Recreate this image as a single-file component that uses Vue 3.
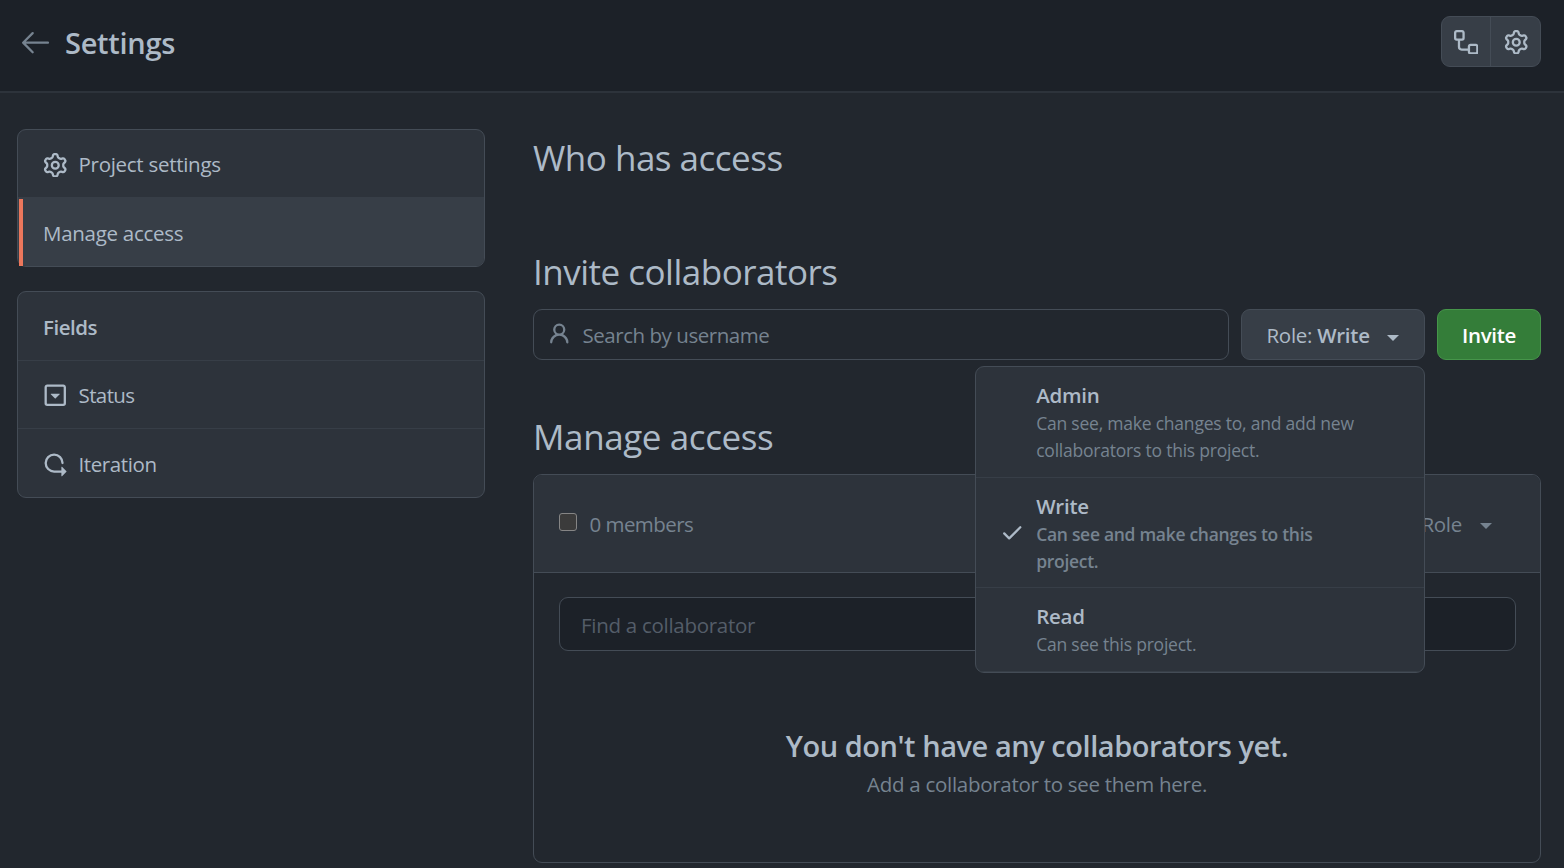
<script setup>
const icons = {
  arrow: 'M10.78 19.03a.75.75 0 01-1.06 0l-6.25-6.25a.75.75 0 010-1.06l6.25-6.25a.75.75 0 111.06 1.06L5.81 11.5h14.44a.75.75 0 010 1.5H5.81l4.97 4.97a.75.75 0 010 1.06z',
  workflow: 'M0 1.75C0 .784.784 0 1.75 0h3.5C6.216 0 7 .784 7 1.75v3.5A1.75 1.75 0 015.25 7H4v4a1 1 0 001 1h4v-1.25C9 9.784 9.784 9 10.75 9h3.5c.966 0 1.75.784 1.75 1.75v3.5A1.75 1.75 0 0114.25 16h-3.5A1.75 1.75 0 019 14.25v-.75H5A2.5 2.5 0 012.5 11V7h-.75A1.75 1.75 0 010 5.25v-3.5zm1.75-.25a.25.25 0 00-.25.25v3.5c0 .138.112.25.25.25h3.5a.25.25 0 00.25-.25v-3.5a.25.25 0 00-.25-.25h-3.5zm9 9a.25.25 0 00-.25.25v3.5c0 .138.112.25.25.25h3.5a.25.25 0 00.25-.25v-3.5a.25.25 0 00-.25-.25h-3.5z',
  gear: 'M7.429 1.525a6.593 6.593 0 011.142 0c.036.003.108.036.137.146l.289 1.105c.147.56.55.967.997 1.189.174.086.341.183.501.29.417.278.97.423 1.53.27l1.102-.303c.11-.03.175.016.195.046.219.31.41.641.573.989.014.031.022.11-.059.19l-.815.806c-.411.406-.562.957-.53 1.456a4.588 4.588 0 010 .582c-.032.499.119 1.05.53 1.456l.815.806c.08.08.073.159.059.19a6.494 6.494 0 01-.573.99c-.02.029-.086.074-.195.045l-1.103-.303c-.559-.153-1.112-.008-1.529.27-.16.107-.327.204-.5.29-.449.222-.851.628-.998 1.189l-.289 1.105c-.029.11-.101.143-.137.146a6.613 6.613 0 01-1.142 0c-.036-.003-.108-.037-.137-.146l-.289-1.105c-.147-.56-.55-.967-.997-1.189a4.502 4.502 0 01-.501-.29c-.417-.278-.97-.423-1.53-.27l-1.102.303c-.11.03-.175-.016-.195-.046a6.492 6.492 0 01-.573-.989c-.014-.031-.022-.11.059-.19l.815-.806c.411-.406.562-.957.53-1.456a4.587 4.587 0 010-.582c.032-.499-.119-1.05-.53-1.456l-.815-.806c-.08-.08-.073-.159-.059-.19a6.44 6.44 0 01.573-.99c.02-.029.086-.075.195-.045l1.103.303c.559.153 1.112.008 1.529-.27.16-.107.327-.204.5-.29.449-.222.851-.628.998-1.189l.289-1.105c.029-.11.101-.143.137-.146zM8 0c-.236 0-.47.01-.701.03-.743.065-1.29.615-1.458 1.261l-.29 1.106c-.017.066-.078.158-.211.224a5.994 5.994 0 00-.668.386c-.123.082-.233.09-.3.071L3.27 2.776c-.644-.177-1.392.02-1.82.63a7.977 7.977 0 00-.704 1.217c-.315.675-.111 1.422.363 1.891l.815.806c.05.048.098.147.088.294a6.084 6.084 0 000 .772c.01.147-.038.246-.088.294l-.815.806c-.474.469-.678 1.216-.363 1.891.2.428.436.835.704 1.218.428.609 1.176.806 1.82.63l1.103-.303c.066-.019.176-.011.299.071.213.143.436.272.668.386.133.066.194.158.212.224l.289 1.106c.169.646.715 1.196 1.458 1.26a8.094 8.094 0 001.402 0c.743-.064 1.29-.614 1.458-1.26l.29-1.106c.017-.066.078-.158.211-.224a5.98 5.98 0 00.668-.386c.123-.082.233-.09.3-.071l1.102.302c.644.177 1.392-.02 1.82-.63.268-.382.505-.789.704-1.217.315-.675.111-1.422-.364-1.891l-.814-.806c-.05-.048-.098-.147-.088-.294a6.1 6.1 0 000-.772c-.01-.147.039-.246.088-.294l.814-.806c.475-.469.679-1.216.364-1.891a7.992 7.992 0 00-.704-1.218c-.428-.609-1.176-.806-1.82-.63l-1.103.303c-.066.019-.176.011-.299-.071a5.991 5.991 0 00-.668-.386c-.133-.066-.194-.158-.212-.224L10.16 1.29C9.99.645 9.444.095 8.701.031A8.094 8.094 0 008 0zm1.5 8a1.5 1.5 0 11-3 0 1.5 1.5 0 013 0zM11 8a3 3 0 11-6 0 3 3 0 016 0z',
  select: 'M5.06 7.356l2.795 2.833c.08.081.21.081.29 0l2.794-2.833c.13-.131.038-.356-.145-.356H5.206c-.183 0-.275.225-.145.356zM1 2.75C1 1.784 1.784 1 2.75 1h10.5c.966 0 1.75.784 1.75 1.75v10.5A1.75 1.75 0 0113.25 15H2.75A1.75 1.75 0 011 13.25V2.75zm1.75-.25a.25.25 0 00-.25.25v10.5c0 .138.112.25.25.25h10.5a.25.25 0 00.25-.25V2.75a.25.25 0 00-.25-.25H2.75z',
  iterations: 'M2.5 7.25a4.75 4.75 0 019.5 0 .75.75 0 001.5 0 6.25 6.25 0 10-6.25 6.25H12v2.146c0 .223.27.335.427.177l2.896-2.896a.25.25 0 000-.354l-2.896-2.896a.25.25 0 00-.427.177V12H7.25A4.75 4.75 0 012.5 7.25z',
  person: 'M10.5 5a2.5 2.5 0 11-5 0 2.5 2.5 0 015 0zm.061 3.073a4 4 0 10-5.123 0 6.004 6.004 0 00-3.431 5.142.75.75 0 001.498.07 4.5 4.5 0 018.99 0 .75.75 0 101.498-.07 6.005 6.005 0 00-3.432-5.142z',
  check: 'M13.78 4.22a.75.75 0 010 1.06l-7.25 7.25a.75.75 0 01-1.06 0L2.22 9.28a.75.75 0 011.06-1.06L6 10.94l6.72-6.72a.75.75 0 011.06 0z'
}

const roles = [
  { name: 'Admin', lines: ['Can see, make changes to, and add new', 'collaborators to this project.'] },
  { name: 'Write', lines: ['Can see and make changes to this', 'project.'], selected: true },
  { name: 'Read', lines: ['Can see this project.'] }
]
</script>

<template>
  <div class="page">
    <header class="topbar">
      <svg class="back" viewBox="0 0 24 24"><path :d="icons.arrow" /></svg>
      <h1 class="title">Settings</h1>
      <div class="btn-group">
        <button class="icon-btn"><svg class="icon" viewBox="0 0 16 16"><path fill-rule="evenodd" :d="icons.workflow" /></svg></button>
        <button class="icon-btn"><svg class="icon" viewBox="0 0 16 16"><path fill-rule="evenodd" :d="icons.gear" /></svg></button>
      </div>
    </header>

    <div class="body">
      <aside class="side">
        <nav class="menu pages">
          <a class="item project"><svg class="icon" viewBox="0 0 16 16"><path fill-rule="evenodd" :d="icons.gear" /></svg><span>Project settings</span></a>
          <a class="item current"><span>Manage access</span></a>
        </nav>
        <nav class="menu fields">
          <div class="item heading"><span>Fields</span></div>
          <a class="item status"><svg class="icon" viewBox="0 0 16 16"><path fill-rule="evenodd" :d="icons.select" /></svg><span>Status</span></a>
          <a class="item iteration"><svg class="icon" viewBox="0 0 16 16"><path fill-rule="evenodd" :d="icons.iterations" /></svg><span>Iteration</span></a>
        </nav>
      </aside>

      <main class="main">
        <h2 class="h who">Who has access</h2>
        <h2 class="h invite-h">Invite collaborators</h2>
        <div class="invite-row">
          <div class="search"><svg class="icon" viewBox="0 0 16 16"><path fill-rule="evenodd" :d="icons.person" /></svg><span>Search by username</span></div>
          <div class="role-wrap">
            <button class="role-btn"><span>Role: <b>Write</b></span><i class="caret"></i></button>
            <div class="dropdown">
              <div v-for="r in roles" :key="r.name" class="option" :class="{ selected: r.selected }">
                <div class="mark"><svg v-if="r.selected" class="icon" viewBox="0 0 16 16"><path :d="icons.check" /></svg></div>
                <div>
                  <div class="name">{{ r.name }}</div>
                  <div v-for="l in r.lines" :key="l" class="desc">{{ l }}</div>
                </div>
              </div>
            </div>
          </div>
          <button class="invite-btn">Invite</button>
        </div>

        <h2 class="h manage-h">Manage access</h2>
        <section class="box">
          <div class="box-head">
            <span class="checkbox"></span>
            <span class="count">0 members</span>
            <span class="role">Role<i class="caret"></i></span>
          </div>
          <div class="find">Find a collaborator</div>
          <div class="blank">
            <h3>You don't have any collaborators yet.</h3>
            <p>Add a collaborator to see them here.</p>
          </div>
        </section>
      </main>
    </div>
  </div>
</template>

<style>
body { background: #22272e; }
</style>

<style scoped>
* { box-sizing: border-box; }
h1, h2, h3, p { margin: 0; font-weight: 400; }
.page {
  height: 868px;
  overflow: hidden;
  background: #22272e;
  color: #adbac7;
  font-family: "Open Sans", "Noto Sans", sans-serif;
  font-size: 20.5px;
  line-height: 32px;
  letter-spacing: -0.28px;
  white-space: nowrap;
}
svg { fill: currentColor; flex: none; display: block; }
.icon { width: 24.5px; height: 24.5px; }
button { font: inherit; letter-spacing: inherit; color: inherit; margin: 0; padding: 0; }

.topbar {
  display: flex;
  align-items: center;
  height: 93px;
  padding: 0 23px 7px 16.5px;
  background: #1c2128;
  border-bottom: 2px solid #2d333b;
}
.back { width: 36.7px; height: 36.7px; color: #768390; }
.title { margin: 1px 0 0 11.8px; font-size: 29px; font-weight: 600; line-height: 40px; }
.btn-group {
  display: flex;
  margin: -1px 0 0 auto;
  width: 100px;
  height: 51px;
  border: 1px solid #444c56;
  border-radius: 9px;
  background: #373e47;
}
.icon-btn { width: 48px; display: flex; align-items: center; justify-content: center; padding-top: 1px; border: 0; background: none; }
.icon-btn + .icon-btn { width: 50px; padding-left: 1px; border-left: 1px solid #444c56; }

.body { display: grid; grid-template-columns: 468px 1008px; column-gap: 48px; padding: 36px 0 0 17px; }
.side { display: flex; flex-direction: column; gap: 24px; }
.menu { display: flex; flex-direction: column; border: 1px solid #444c56; border-radius: 9px; background: #2d333b; }
.pages { height: 138px; }
.fields { height: 207px; }
.item { flex: 1; display: flex; align-items: center; gap: 11px; padding: 2px 0 0 25px; }
.item .icon { margin-top: 1px; }
.item + .item { border-top: 1px solid #373e47; }
.item.project { flex: none; height: 67px; padding-top: 1px; }
.item.project .icon { margin-top: 2px; }
.item.current { position: relative; background: #373e47; border-radius: 0 0 8px 8px; padding-top: 2px; }
.item.current::before { content: ""; position: absolute; left: 1px; top: 1px; bottom: 0; width: 4px; background: #ec775c; }
.item.heading { flex: none; height: 68px; padding-top: 2px; font-weight: 600; letter-spacing: -0.5px; }
.item.status { flex: none; height: 68px; padding-top: 0; letter-spacing: -0.6px; }
.item.status .icon { margin-top: 2px; }
.item.iteration { padding-top: 1px; letter-spacing: -0.4px; }
.item.iteration .icon { margin-top: 2px; }

.h { font-size: 35px; line-height: 48px; letter-spacing: -0.5px; }
.who { margin-top: 5px; }
.invite-h { margin-top: 66px; }
.invite-row { display: flex; gap: 12px; margin-top: 13px; height: 51px; }
.search { flex: 1; display: flex; align-items: center; gap: 11px; padding-left: 13px; border: 1px solid #444c56; border-radius: 9px; color: #768390; letter-spacing: -0.46px; }
.role-wrap { position: relative; width: 184px; }
.role-btn { display: flex; align-items: center; width: 100%; height: 51px; padding: 0 25px 0 24.5px; border: 1px solid #444c56; border-radius: 9px; background: #373e47; }
.role-btn b { font-weight: 600; }
.caret { width: 0; height: 0; border: 6px solid transparent; border-top-color: currentColor; border-bottom: 0; }
.role-btn .caret { margin: 7px 0 0 auto; }
.invite-btn { width: 104px; border: 1px solid #46954a; border-radius: 9px; background: #347d39; color: #fff; font-weight: 600; }

.dropdown { position: absolute; z-index: 2; top: 57px; right: 0; width: 450px; height: 307px; border: 1px solid #444c56; border-radius: 9px; background: #2d333b; overflow: hidden; }
.option { display: flex; height: 110px; padding: 13px 0 0; border-bottom: 1px solid #373e47; }
.option:first-child { height: 111px; }
.option:last-child { height: 84px; }
.mark { display: flex; align-items: center; width: 60.2px; padding: 0 0 14px 24px; }
.name { font-weight: 600; line-height: 30px; letter-spacing: -0.25px; }
.desc { font-size: 17.5px; line-height: 27px; letter-spacing: -0.22px; color: #768390; }
.selected .desc { font-weight: 600; letter-spacing: -0.3px; }

.manage-h { margin-top: 53px; letter-spacing: -0.4px; }
.box { margin-top: 13px; height: 389px; border: 1px solid #444c56; border-radius: 9px; overflow: hidden; }
.box-head { display: flex; align-items: center; height: 98px; padding: 0 48px 0 25px; background: #2d333b; border-bottom: 1px solid #444c56; color: #768390; }
.checkbox { width: 18px; height: 18px; margin-bottom: 3px; border: 1px solid #858585; border-radius: 3px; background: #3b3b3b; }
.count { margin-left: 12.5px; letter-spacing: -0.55px; }
.role { display: flex; align-items: center; gap: 18px; margin-left: auto; }
.role .caret { margin-top: 5px; }
.find { display: flex; align-items: center; height: 54px; margin: 24px 24px 0 25px; padding: 2px 0 0 21px; border: 1px solid #444c56; border-radius: 9px; background: #1c2128; color: #545d68; }
.blank { padding-top: 72px; text-align: center; }
.blank h3 { font-size: 29px; font-weight: 600; line-height: 46px; letter-spacing: -0.46px; }
.blank p { margin-top: -1px; color: #768390; }
</style>
